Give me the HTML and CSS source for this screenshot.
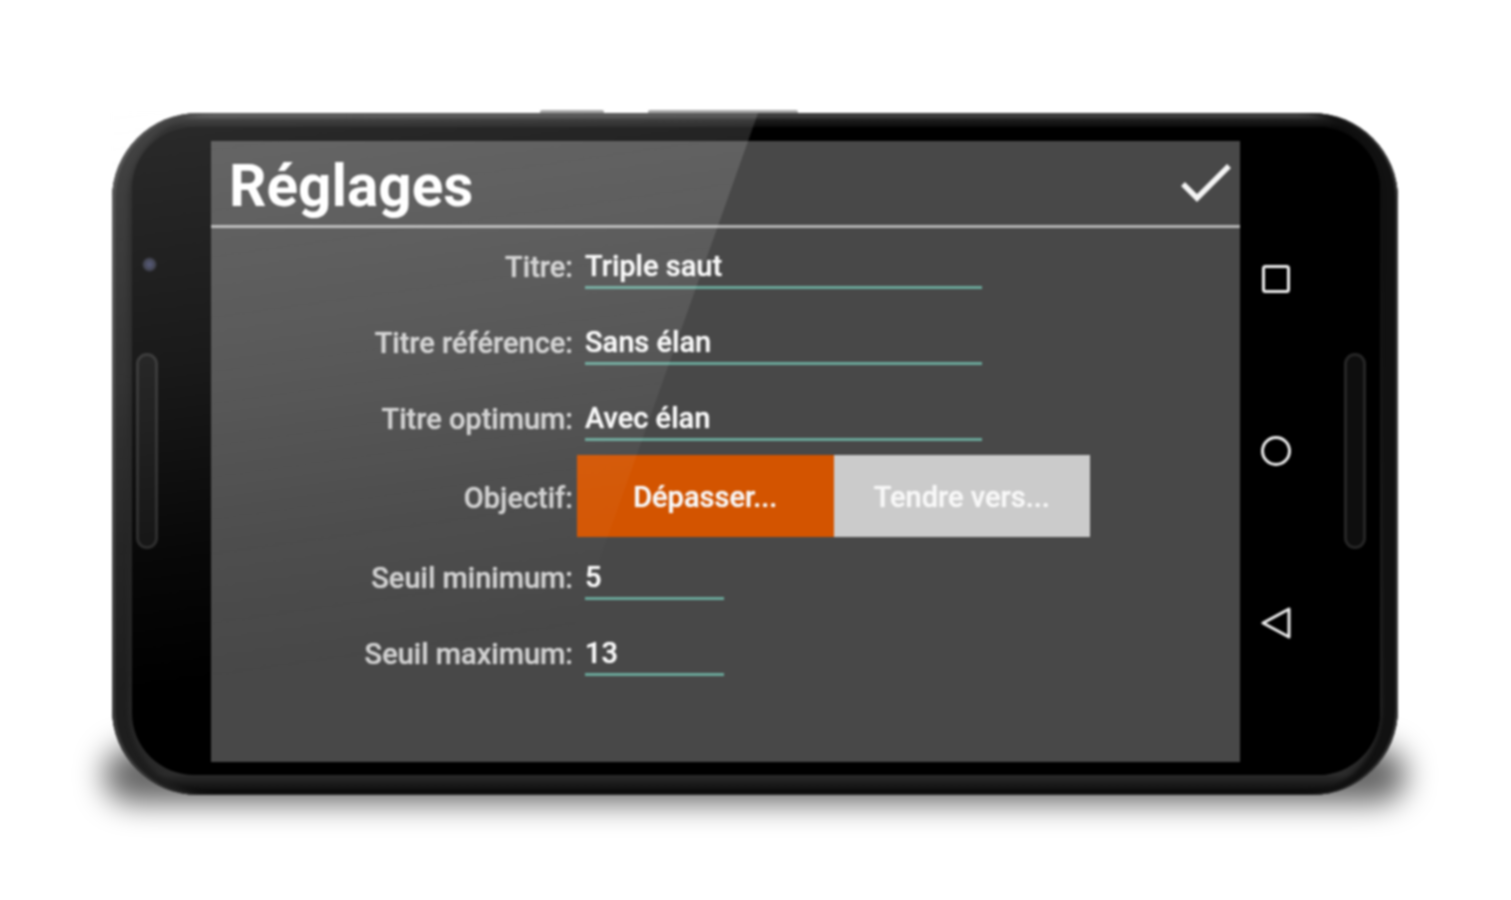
FILE: index.html
```html
<!DOCTYPE html>
<html lang="fr">
<head>
    <meta charset="UTF-8">
    <meta name="viewport" content="width=device-width, initial-scale=1.0">
    <title>Réglages</title>
    <link rel="stylesheet" href="styles.css">
</head>
<body>
    <div class="device">
        <div class="ground-shadow"></div>
        <div class="hw-button hw-button-power"></div>
        <div class="hw-button hw-button-volume"></div>
        <div class="phone">
            <div class="bezel">
                <div class="side-left">
                    <span class="camera"></span>
                    <span class="speaker"></span>
                </div>
                <div class="screen">
                    <header class="app-header">
                        <h1>Réglages</h1>
                        <svg class="check" width="52" height="42" viewBox="0 0 52 42">
                            <path d="M3 22 L17 36 L49 4" fill="none" stroke="#f4f4f4" stroke-width="5.5"/>
                        </svg>
                    </header>
                    <div class="form">
                        <label class="form-label">Titre:</label>
                        <div class="field field-long">Triple saut</div>
                        <label class="form-label">Titre référence:</label>
                        <div class="field field-long">Sans élan</div>
                        <label class="form-label">Titre optimum:</label>
                        <div class="field field-long">Avec élan</div>
                        <label class="form-label">Objectif:</label>
                        <div class="toggle">
                            <button class="toggle-btn active">Dépasser...</button>
                            <button class="toggle-btn">Tendre vers...</button>
                        </div>
                        <label class="form-label">Seuil minimum:</label>
                        <div class="field field-short">5</div>
                        <label class="form-label">Seuil maximum:</label>
                        <div class="field field-short">13</div>
                    </div>
                </div>
                <nav class="navbar">
                    <svg width="34" height="34" viewBox="0 0 34 34">
                        <rect x="4.5" y="4.5" width="25" height="25" rx="2" fill="none" stroke="#eee" stroke-width="3"/>
                    </svg>
                    <svg width="34" height="34" viewBox="0 0 34 34">
                        <circle cx="17" cy="17" r="13.5" fill="none" stroke="#eee" stroke-width="3"/>
                    </svg>
                    <svg width="34" height="34" viewBox="0 0 34 34">
                        <path d="M4 17 L30 3 V31 Z" fill="none" stroke="#eee" stroke-width="3" stroke-linejoin="round"/>
                    </svg>
                </nav>
                <div class="side-right">
                    <span class="speaker"></span>
                </div>
            </div>
            <div class="gloss"></div>
        </div>
    </div>
</body>
</html>
```
FILE: styles.css
```css
body {
    margin: 0;
    height: 900px;
    overflow: hidden;
    background-color: #fff;
    font-family: Roboto, "Liberation Sans", sans-serif;
}
.device {
    position: relative;
    width: 1286px;
    height: 682px;
    margin: 113px 0 0 112px;
    filter: blur(0.9px);
}
.ground-shadow {
    position: absolute;
    left: -8px;
    right: -8px;
    bottom: -8px;
    height: 56px;
    border-radius: 40px;
    background: rgba(0, 0, 0, 0.6);
    filter: blur(15px);
}
.hw-button {
    position: absolute;
    top: -3px;
    height: 5px;
    background: #a8a8a8;
    border-radius: 2px 2px 0 0;
}
.hw-button-power {
    left: 428px;
    width: 64px;
}
.hw-button-volume {
    left: 536px;
    width: 150px;
}
.phone {
    position: relative;
    box-sizing: border-box;
    height: 100%;
    padding: 14px 18px 20px 20px;
    border-radius: 86px;
    background: linear-gradient(180deg, #6a6a6a 0, #1c1c1c 7px, #0c0c0c 14px, #2a2a2a 96%, #2c2c2c 97%, #060606 100%);
    box-shadow: inset 3px 0 2px #3f3f3f, inset -2px 0 2px #484848, inset 16px 0 4px #1e1e1e, inset -16px 0 4px #111;
}
.bezel {
    display: flex;
    height: 100%;
    border-radius: 62px;
    background: #000;
    overflow: hidden;
}
.side-left {
    position: relative;
    display: flex;
    justify-content: flex-start;
    align-items: center;
    width: 79px;
    flex: none;
}
.side-right {
    position: relative;
    display: flex;
    justify-content: flex-end;
    align-items: center;
    flex: 1;
    padding-right: 14px;
    background: linear-gradient(90deg, #000 72px, #0a0a0a 72px);
}
.side-left .speaker {
    margin-left: 4px;
}
.speaker {
    box-sizing: border-box;
    width: 22px;
    height: 196px;
    border: 3px solid #262626;
    border-radius: 11px;
    background: #0e0e0e;
}
.camera {
    position: absolute;
    left: 10px;
    top: 130px;
    width: 15px;
    height: 15px;
    border-radius: 50%;
    background: radial-gradient(circle, #3f4468 0, #2a2c3c 50%, transparent 75%);
}
.screen {
    display: flex;
    flex-direction: column;
    width: 1029px;
    flex: none;
    margin: 14px 0 13px;
    background: #484848;
}
.app-header {
    display: flex;
    justify-content: space-between;
    align-items: center;
    box-sizing: border-box;
    height: 87px;
    padding: 0 8px 0 18px;
    border-bottom: 3px solid #b4b4b4;
}
.app-header h1 {
    margin: 6px 0 0;
    color: #fff;
    font-size: 58.5px;
    font-weight: 700;
    line-height: 1;
}
.form {
    display: grid;
    grid-template-columns: 362px 1fr;
    row-gap: 28px;
    align-items: center;
    padding-top: 13px;
}
.form-label {
    padding-top: 3px;
    text-align: right;
    color: #cfcfcf;
    font-size: 29px;
    font-weight: 500;
    text-shadow: 0 0 1px #cfcfcf;
}
.field {
    box-sizing: border-box;
    height: 48px;
    margin-left: 12px;
    border-bottom: 3px solid #6aa699;
    color: #f8f8f8;
    font-size: 29px;
    font-weight: 500;
    line-height: 50px;
    text-shadow: 0 0 1px #f8f8f8;
}
.field-long {
    width: 397px;
}
.field-short {
    width: 139px;
}
.toggle {
    display: flex;
    width: 513px;
    height: 82px;
    margin: -14px 0 -13px 4px;
}
.toggle-btn {
    flex: 1;
    padding-top: 2px;
    border: none;
    background: #cbcbcb;
    color: #f8f8f8;
    font-family: inherit;
    font-size: 29px;
    font-weight: 500;
    text-shadow: 0 0 1px #f8f8f8;
}
.toggle-btn.active {
    background: #d35400;
}
.navbar {
    display: flex;
    flex-direction: column;
    justify-content: center;
    align-items: center;
    gap: 138px;
    width: 72px;
    flex: none;
}
.gloss {
    position: absolute;
    inset: 0;
    pointer-events: none;
    clip-path: polygon(0 0, 646px 0, 404px 682px, 0 682px);
    background: linear-gradient(172deg, rgba(255, 255, 255, 0.17) 0, rgba(255, 255, 255, 0.1) 30%, rgba(255, 255, 255, 0.03) 52%, rgba(255, 255, 255, 0) 68%);
}
```
